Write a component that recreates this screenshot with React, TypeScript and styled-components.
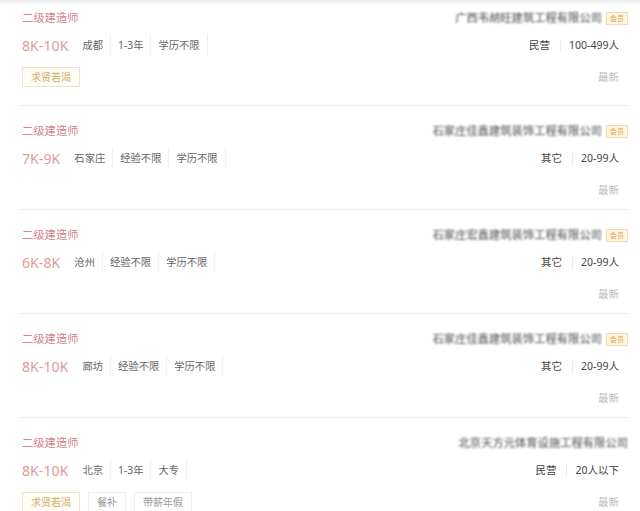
import React from "react";
import styled, { createGlobalStyle } from "styled-components";

const Global = createGlobalStyle`
  html, body { margin: 0; padding: 0; background: #fff; }
  body { font-family: "Noto Sans", "Noto Sans CJK SC", sans-serif; overflow: hidden; }
`;

const Page = styled.div`
  width: 640px;
  height: 511px;
  overflow: hidden;
  position: relative;
  background: #fff;
  &::before {
    content: "";
    position: absolute;
    left: 0; right: 0; top: 0;
    height: 6px;
    background: linear-gradient(#ececec, rgba(255,255,255,0));
    z-index: 2;
  }
`;

const List = styled.div`
  margin-top: -7px;
  display: flex;
  flex-direction: column;
`;

const Row = styled.div`
  margin: 0 12px 0 20px;
  padding: 17px 0 11px 2px;
  border-bottom: 1px solid #efefef;
  display: flex;
  justify-content: space-between;
`;

const Left = styled.div`
  display: flex;
  flex-direction: column;
`;

const Right = styled.div`
  display: flex;
  flex-direction: column;
  align-items: flex-end;
`;

const Title = styled.div`
  height: 16px;
  line-height: 16px;
  font-size: 11.3px;
  color: #d4868c;
`;

const InfoLine = styled.div`
  margin-top: 8px;
  height: 22px;
  display: flex;
  align-items: center;
`;

const Salary = styled.span`
  font-size: 14px;
  color: #de9a9b;
  margin-right: 7px;
  letter-spacing: 0.1px;
`;

const Req = styled.span`
  height: 22px;
  line-height: 22px;
  padding: 0 7px;
  font-size: 10.3px;
  color: #666;
  border-right: 1px solid #efefef;
`;

const Welfare = styled.div`
  margin-top: 11px;
  margin-bottom: 7px;
  display: flex;
  gap: 8px;
`;

const Perk = styled.span<{ $gold?: boolean }>`
  height: 18px;
  line-height: 18px;
  padding: 0 8px;
  font-size: 10px;
  color: ${(p) => (p.$gold ? "#cfae62" : "#9a9a9a")};
  border: 1px solid ${(p) => (p.$gold ? "#efe4c8" : "#eeeeee")};
  background: ${(p) => (p.$gold ? "#fffdf7" : "#fff")};
`;

const CompanyLine = styled.div`
  height: 16px;
  display: flex;
  align-items: center;
`;

const Company = styled.span`
  display: inline-block;
  font-size: 11.3px;
  line-height: 16px;
  color: #6a6a6a;
  filter: blur(0.8px);
  font-weight: 500;
`;

const Badge = styled.span`
  margin-left: 4px;
  width: 20px;
  height: 11px;
  line-height: 11px;
  text-align: center;
  font-size: 7px;
  color: #e4a24e;
  background: #fdf5e2;
  border: 1px solid #f1dcae;
`;

const TypeLine = styled.div`
  margin-top: 8px;
  height: 22px;
  padding-right: 9px;
  display: flex;
  align-items: center;
  font-size: 10.5px;
  color: #444;
`;

const TypeItem = styled.span<{ $sep?: boolean }>`
  line-height: 13px;
  padding: ${(p) => (p.$sep ? "0 0 0 8px" : "0 10px 0 0")};
  border-left: ${(p) => (p.$sep ? "1px solid #ececec" : "none")};
`;

const Latest = styled.div`
  margin-top: 13px;
  height: 16px;
  line-height: 16px;
  padding-right: 9px;
  font-size: 10.5px;
  color: #bdbdbd;
`;

type Job = {
  salary: string;
  reqs: string[];
  perks?: string[];
  company: string;
  member: boolean;
  type: string;
  size: string;
};

const jobs: Job[] = [
  { salary: "8K-10K", reqs: ["成都", "1-3年", "学历不限"], perks: ["求贤若渴"], company: "广西韦胡旺建筑工程有限公司", member: true, type: "民营", size: "100-499人" },
  { salary: "7K-9K", reqs: ["石家庄", "经验不限", "学历不限"], company: "石家庄佳鑫建筑装饰工程有限公司", member: true, type: "其它", size: "20-99人" },
  { salary: "6K-8K", reqs: ["沧州", "经验不限", "学历不限"], company: "石家庄宏鑫建筑装饰工程有限公司", member: true, type: "其它", size: "20-99人" },
  { salary: "8K-10K", reqs: ["廊坊", "经验不限", "学历不限"], company: "石家庄佳鑫建筑装饰工程有限公司", member: true, type: "其它", size: "20-99人" },
  { salary: "8K-10K", reqs: ["北京", "1-3年", "大专"], perks: ["求贤若渴", "餐补", "带薪年假"], company: "北京天方元体育设施工程有限公司", member: false, type: "民营", size: "20人以下" },
];

export default function App() {
  return (
    <Page>
      <Global />
      <List>
        {jobs.map((j, i) => (
          <Row key={i}>
            <Left>
              <Title>二级建造师</Title>
              <InfoLine>
                <Salary>{j.salary}</Salary>
                {j.reqs.map((r) => (
                  <Req key={r}>{r}</Req>
                ))}
              </InfoLine>
              {j.perks && (
                <Welfare>
                  {j.perks.map((p, k) => (
                    <Perk key={p} $gold={k === 0}>{p}</Perk>
                  ))}
                </Welfare>
              )}
            </Left>
            <Right>
              <CompanyLine>
                <Company>{j.company}</Company>
                {j.member && <Badge>会员</Badge>}
              </CompanyLine>
              <TypeLine>
                <TypeItem>{j.type}</TypeItem>
                <TypeItem $sep>{j.size}</TypeItem>
              </TypeLine>
              <Latest>最新</Latest>
            </Right>
          </Row>
        ))}
      </List>
    </Page>
  );
}
